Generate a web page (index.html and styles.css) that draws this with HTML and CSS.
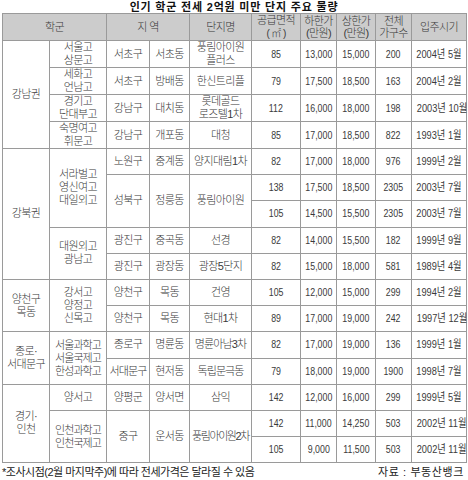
FILE: index.html
```html
<!DOCTYPE html>
<html lang="ko">
<head>
<meta charset="utf-8">
<link rel="stylesheet" href="styles.css">
</head>
<body>
<div class="page">
  <div class="title">인기 학군 전세 2억원 미만 단지 주요 물량</div>
  <table class="grid">
    <colgroup>
      <col class="c1"><col class="c2"><col class="c3"><col class="c4"><col class="c5">
      <col class="c6"><col class="c7"><col class="c8"><col class="c9"><col class="c10">
    </colgroup>
    <thead>
      <tr class="head">
        <th colspan="2">학군</th>
        <th colspan="2">지 역</th>
        <th>단지명</th>
        <th>공급면적<br><span class="unit">( ㎡ )</span></th>
        <th>하한가<br>(만원)</th>
        <th>상한가<br>(만원)</th>
        <th>전체<br>가구수</th>
        <th>입주시기</th>
      </tr>
    </thead>
    <tbody>
      <tr>
        <td rowspan="4">강남권</td>
        <td>서울고<br>상문고</td>
        <td>서초구</td><td>서초동</td><td>풍림아이원<br>플러스</td>
        <td class="n"><span>85</span></td><td class="n"><span>13,000</span></td><td class="n"><span>15,000</span></td><td class="n"><span>200</span></td><td class="d"><span>2004년 5월</span></td>
      </tr>
      <tr>
        <td>세화고<br>언남고</td>
        <td>서초구</td><td>방배동</td><td>한신트리플</td>
        <td class="n"><span>79</span></td><td class="n"><span>17,500</span></td><td class="n"><span>18,500</span></td><td class="n"><span>163</span></td><td class="d"><span>2004년 2월</span></td>
      </tr>
      <tr>
        <td>경기고<br>단대부고</td>
        <td>강남구</td><td>대치동</td><td>롯데골드<br>로즈텔1차</td>
        <td class="n"><span>112</span></td><td class="n"><span>16,000</span></td><td class="n"><span>18,000</span></td><td class="n"><span>198</span></td><td class="d"><span>2003년 10월</span></td>
      </tr>
      <tr>
        <td>숙명여고<br>휘문고</td>
        <td>강남구</td><td>개포동</td><td>대청</td>
        <td class="n"><span>85</span></td><td class="n"><span>17,000</span></td><td class="n"><span>18,500</span></td><td class="n"><span>822</span></td><td class="d"><span>1993년 1월</span></td>
      </tr>
      <tr>
        <td rowspan="5">강북권</td>
        <td rowspan="3">서라벌고<br>영신여고<br>대일외고</td>
        <td>노원구</td><td>중계동</td><td>양지대림1차</td>
        <td class="n"><span>82</span></td><td class="n"><span>17,000</span></td><td class="n"><span>18,000</span></td><td class="n"><span>976</span></td><td class="d"><span>1999년 2월</span></td>
      </tr>
      <tr>
        <td rowspan="2">성북구</td><td rowspan="2">정릉동</td><td rowspan="2">풍림아이원</td>
        <td class="n"><span>138</span></td><td class="n"><span>17,500</span></td><td class="n"><span>18,500</span></td><td class="n"><span>2305</span></td><td class="d"><span>2003년 7월</span></td>
      </tr>
      <tr>
        <td class="n"><span>105</span></td><td class="n"><span>14,500</span></td><td class="n"><span>15,500</span></td><td class="n"><span>2305</span></td><td class="d"><span>2003년 7월</span></td>
      </tr>
      <tr>
        <td rowspan="2">대원외고<br>광남고</td>
        <td>광진구</td><td>중곡동</td><td>선경</td>
        <td class="n"><span>82</span></td><td class="n"><span>14,000</span></td><td class="n"><span>15,500</span></td><td class="n"><span>182</span></td><td class="d"><span>1999년 9월</span></td>
      </tr>
      <tr>
        <td>광진구</td><td>광장동</td><td>광장5단지</td>
        <td class="n"><span>82</span></td><td class="n"><span>15,000</span></td><td class="n"><span>18,000</span></td><td class="n"><span>581</span></td><td class="d"><span>1989년 4월</span></td>
      </tr>
      <tr>
        <td rowspan="2">양천구<br>목동</td>
        <td rowspan="2">강서고<br>양정고<br>신목고</td>
        <td>양천구</td><td>목동</td><td>건영</td>
        <td class="n"><span>105</span></td><td class="n"><span>12,000</span></td><td class="n"><span>15,000</span></td><td class="n"><span>299</span></td><td class="d"><span>1994년 2월</span></td>
      </tr>
      <tr>
        <td>양천구</td><td>목동</td><td>현대1차</td>
        <td class="n"><span>89</span></td><td class="n"><span>17,000</span></td><td class="n"><span>19,000</span></td><td class="n"><span>242</span></td><td class="d"><span>1997년 12월</span></td>
      </tr>
      <tr>
        <td rowspan="2">종로·<br>서대문구</td>
        <td rowspan="2" class="tight">서울과학고<br>서울국제고<br>한성과학고</td>
        <td>종로구</td><td>명륜동</td><td class="tight">명륜아남3차</td>
        <td class="n"><span>82</span></td><td class="n"><span>17,000</span></td><td class="n"><span>19,000</span></td><td class="n"><span>136</span></td><td class="d"><span>1999년 1월</span></td>
      </tr>
      <tr>
        <td class="tight">서대문구</td><td>현저동</td><td class="tight">독립문극동</td>
        <td class="n"><span>79</span></td><td class="n"><span>18,000</span></td><td class="n"><span>19,000</span></td><td class="n"><span>1900</span></td><td class="d"><span>1998년 7월</span></td>
      </tr>
      <tr>
        <td rowspan="3">경기·<br>인천</td>
        <td>양서고</td>
        <td>양평군</td><td>양서면</td><td>삼익</td>
        <td class="n"><span>142</span></td><td class="n"><span>12,000</span></td><td class="n"><span>16,000</span></td><td class="n"><span>299</span></td><td class="d"><span>1999년 5월</span></td>
      </tr>
      <tr>
        <td rowspan="2" class="tight">인천과학고<br>인천국제고</td>
        <td rowspan="2">중구</td><td rowspan="2">운서동</td><td rowspan="2" class="tighter">풍림아이원2차</td>
        <td class="n"><span>142</span></td><td class="n"><span>11,000</span></td><td class="n"><span>14,250</span></td><td class="n"><span>503</span></td><td class="d"><span>2002년 11월</span></td>
      </tr>
      <tr>
        <td class="n"><span>105</span></td><td class="n"><span>9,000</span></td><td class="n"><span>11,500</span></td><td class="n"><span>503</span></td><td class="d"><span>2002년 11월</span></td>
      </tr>
    </tbody>
  </table>
  <div class="foot">
    <span>*조사시점(2월 마지막주)에 따라 전세가격은 달라질 수 있음</span>
    <span class="source">자료 : 부동산뱅크</span>
  </div>
</div>
</body>
</html>
```

FILE: styles.css
```css
html, body {
  margin: 0;
  padding: 0;
  background: #ffffff;
}

.page {
  width: 468px;
  padding-left: 2px;
  box-sizing: border-box;
  font-family: "Liberation Sans", "Noto Sans CJK KR", sans-serif;
  color: #3a3a3a;
}

.title {
  width: 464px;
  height: 13px;
  line-height: 13px;
  padding-top: 1px;
  text-align: center;
  font-size: 11px;
  font-weight: bold;
  letter-spacing: 0.8px;
  color: #111111;
  margin-bottom: -1px;
}

.grid {
  width: 464px;
  table-layout: fixed;
  border-collapse: collapse;
  font-size: 11px;
  font-weight: 300;
  letter-spacing: -0.6px;
  line-height: 13px;
}

.c1 { width: 47px; }
.c2 { width: 57px; }
.c3 { width: 43px; }
.c4 { width: 40px; }
.c5 { width: 62px; }
.c6 { width: 49px; }
.c7 { width: 36px; }
.c8 { width: 39px; }
.c9 { width: 36px; }
.c10 { width: 55px; }

.grid th,
.grid td {
  border: 1px solid #9a9a9a;
  padding: 0;
  text-align: center;
  vertical-align: middle;
  font-weight: 300;
  white-space: nowrap;
  overflow: visible;
}

.grid .head th {
  background: #cccccc;
  height: 25px;
  line-height: 12.5px;
}

.grid tbody tr {
  height: 26.2px;
}

.unit {
  font-size: 10px;
}

.grid td.n,
.grid td.d {
  font-weight: normal;
  letter-spacing: 0;
  font-size: 11px;
}

.grid td.n span,
.grid td.d span {
  display: inline-block;
  transform: scaleX(0.8);
}

.grid td.d span {
  transform: scaleX(0.84);
}

.grid td.tight {
  letter-spacing: -0.9px;
}

.grid td.tighter {
  letter-spacing: -1.4px;
}

.foot {
  width: 464px;
  display: flex;
  justify-content: space-between;
  font-size: 11px;
  line-height: 14px;
  letter-spacing: -0.5px;
  margin-top: 2px;
  color: #222222;
}

.foot .source {
  letter-spacing: 0.6px;
  padding-right: 2px;
}
```
